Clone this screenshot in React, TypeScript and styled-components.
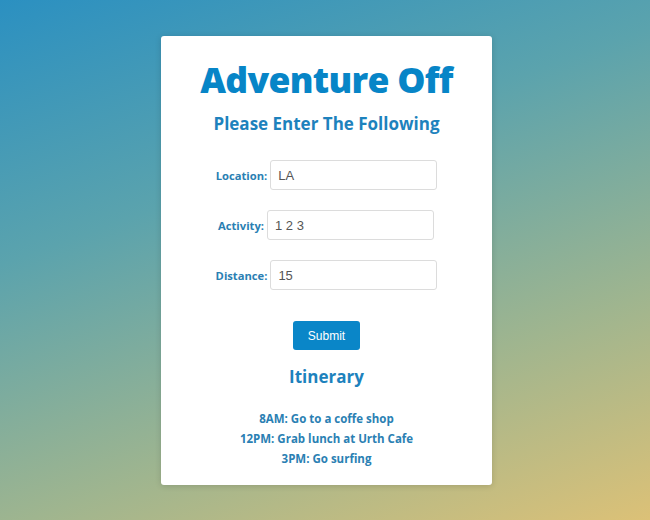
import React from "react";
import styled, { createGlobalStyle } from "styled-components";

const Global = createGlobalStyle`
  html, body { margin: 0; padding: 0; }
  body {
    width: 650px;
    height: 520px;
    overflow: hidden;
    background: linear-gradient(160deg, #2b90c1 0%, #5ba3ad 35%, #9fb58f 70%, #dcc177 100%);
  }
`;

const Page = styled.div`
  width: 650px;
  height: 520px;
  display: flex;
  justify-content: center;
  align-items: flex-start;
  padding-top: 36px;
  box-sizing: border-box;
`;

const Card = styled.div`
  width: 331px;
  height: 449px;
  margin-left: 3px;
  background: #ffffff;
  border-radius: 3px;
  box-shadow: 0 1px 6px rgba(0, 0, 0, 0.15);
  display: flex;
  flex-direction: column;
  align-items: center;
  box-sizing: border-box;
  padding-top: 18px;
  font-family: "Open Sans", "Noto Sans", sans-serif;
`;

const Title = styled.h1`
  margin: 0;
  font-size: 35.5px;
  line-height: 50px;
  font-weight: 800;
  color: #0785c7;
  letter-spacing: -0.7px;
`;

const Subtitle = styled.h2`
  margin: 8px 0 0;
  font-size: 17px;
  line-height: 24px;
  font-weight: 700;
  color: #1d82bd;
`;

const Form = styled.div`
  margin-top: 24px;
  display: flex;
  flex-direction: column;
  align-items: center;
  gap: 20px;
`;

const Row = styled.div<{ $shift?: number }>`
  display: flex;
  align-items: center;
  gap: 3px;
  margin-left: ${(p) => p.$shift ?? 0}px;
`;

const Label = styled.label`
  font-size: 11.2px;
  font-weight: 700;
  color: #2a80b3;
`;

const Input = styled.input`
  width: 167px;
  height: 30px;
  box-sizing: border-box;
  border: 1px solid #dcdcdc;
  border-radius: 3px;
  padding: 0 7px;
  font-family: "Liberation Sans", Arial, sans-serif;
  font-size: 13px;
  color: #555;
  outline: none;
`;

const Button = styled.button`
  margin-top: 31px;
  width: 67px;
  height: 29px;
  border: none;
  border-radius: 3px;
  background: #0a86c8;
  color: #fff;
  font-family: "Liberation Sans", Arial, sans-serif;
  font-size: 12px;
`;

const Heading = styled.h3`
  margin: 14px 0 0;
  font-size: 17px;
  line-height: 26px;
  font-weight: 700;
  color: #1d82bd;
`;

const List = styled.div`
  margin-top: 19px;
  display: flex;
  flex-direction: column;
  align-items: center;
`;

const Item = styled.div`
  font-size: 11.5px;
  line-height: 20px;
  font-weight: 700;
  color: #2a80b3;
`;

export default function App() {
  return (
    <>
      <Global />
      <Page>
        <Card>
          <Title>Adventure Off</Title>
          <Subtitle>Please Enter The Following</Subtitle>
          <Form>
            <Row $shift={0}>
              <Label>Location:</Label>
              <Input defaultValue="LA" />
            </Row>
            <Row $shift={-1}>
              <Label>Activity:</Label>
              <Input defaultValue="1 2 3" />
            </Row>
            <Row $shift={0}>
              <Label>Distance:</Label>
              <Input defaultValue="15" />
            </Row>
          </Form>
          <Button>Submit</Button>
          <Heading>Itinerary</Heading>
          <List>
            <Item>8AM: Go to a coffe shop</Item>
            <Item>12PM: Grab lunch at Urth Cafe</Item>
            <Item>3PM: Go surfing</Item>
          </List>
        </Card>
      </Page>
    </>
  );
}
